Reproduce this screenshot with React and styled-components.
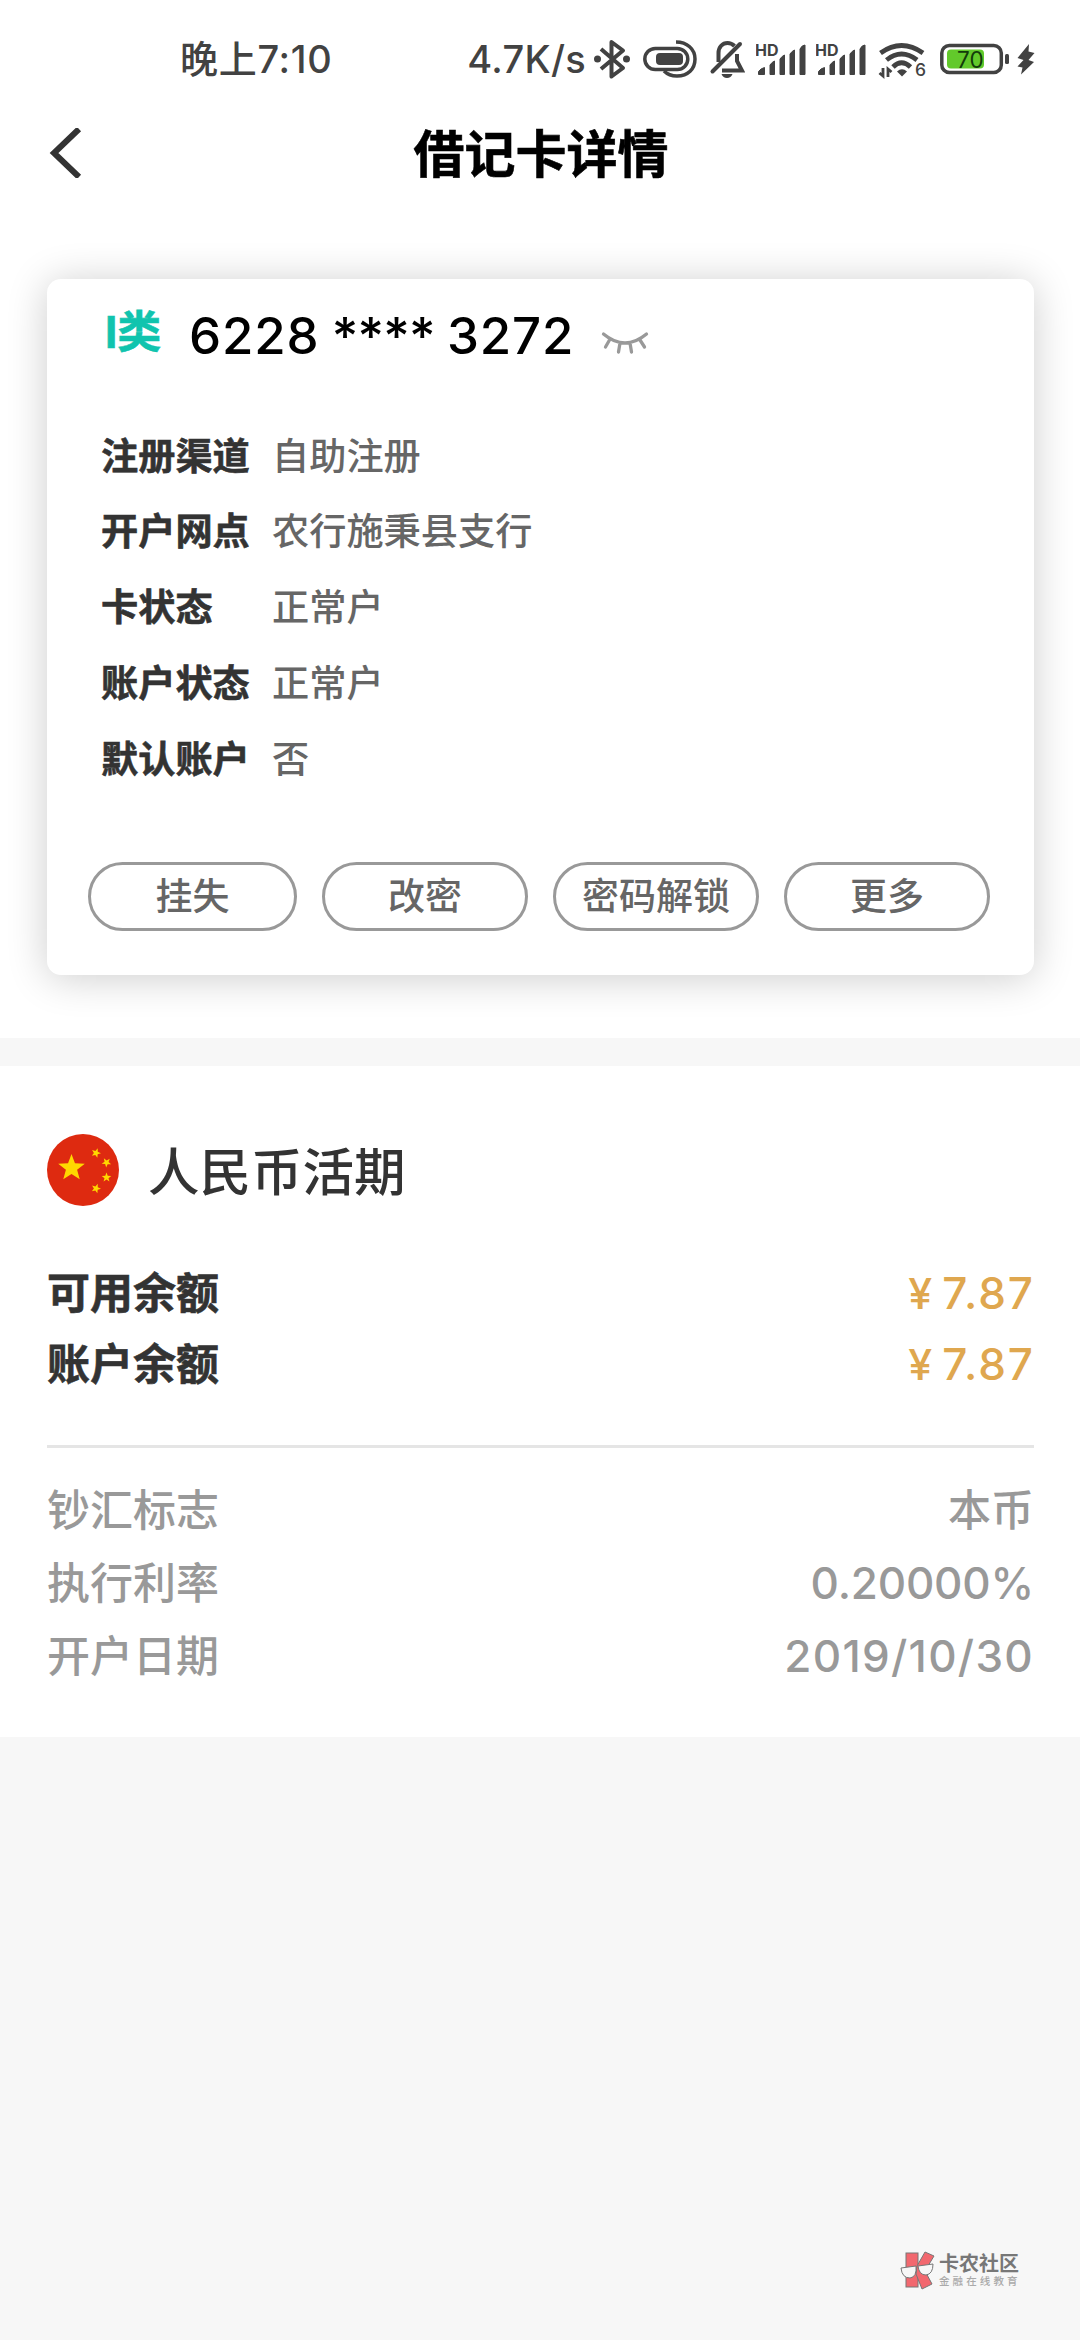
import React from "react";
import styled, { createGlobalStyle } from "styled-components";

const GlobalStyle = createGlobalStyle`
  * {
    box-sizing: border-box;
  }

  body {
    margin: 0;
    background-color: #f7f7f7;
    font-family: Inter, "Noto Sans CJK SC", sans-serif;
    color: #333;
  }
`;

const Page = styled.div`
  width: 1080px;
  height: 2340px;
  display: flex;
  flex-direction: column;
  background-color: #f7f7f7;
  overflow: hidden;
`;

const StatusBar = styled.div`
  height: 118px;
  padding: 0 45px 0 180px;
  display: flex;
  align-items: center;
  justify-content: space-between;
  background-color: white;
  color: #424242;
  font-size: 38px;
  line-height: 44px;
`;

const Time = styled.div`
  letter-spacing: 0.7px;
  font-weight: 500;
`;

const StatusIcons = styled.div`
  display: flex;
  align-items: center;
`;

const Speed = styled.span`
  margin-right: 7px;
  letter-spacing: 0.3px;
  font-weight: 500;
`;

const StatusIcon = styled.svg`
  display: block;
  flex: none;
  width: ${props => props.$width}px;
  height: 44px;
  margin-right: ${props => props.$gap || 0}px;
`;

const Header = styled.div`
  height: 70px;
  padding: 0 47px 0 49px;
  display: grid;
  grid-template-columns: 60px 1fr 60px;
  align-items: center;
  background-color: white;
`;

const BackIcon = styled.svg`
  display: block;
  width: 34px;
  height: 50px;
`;

const Title = styled.div`
  padding-top: 3px;
  color: black;
  font-size: 51px;
  line-height: 67px;
  font-weight: bold;
  text-align: center;
  -webkit-text-stroke: 0.6px;
`;

const CardSection = styled.div`
  height: 850px;
  padding: 91px 46px 0 47px;
  background-color: white;
`;

const Card = styled.div`
  height: 696px;
  border-radius: 14px;
  padding: 22px 44px 0 41px;
  background-color: white;
  box-shadow: 0 3px 40px rgba(0, 0, 0, 0.2);
`;

const CardTop = styled.div`
  height: 70px;
  padding-left: 17px;
  display: flex;
  align-items: center;
`;

const CardType = styled.div`
  width: 84px;
  padding-bottom: 8px;
  color: #10c4ae;
  font-size: 44px;
  line-height: 60px;
  font-weight: bold;
  -webkit-text-stroke: 0.6px;
`;

const CardNumber = styled.div`
  width: 412px;
  color: black;
  font-size: 51px;
  line-height: 70px;
  font-weight: 500;
  letter-spacing: 0.8px;
  white-space: nowrap;
`;

const Mask = styled.span`
  margin: 0 -2px;
  letter-spacing: -0.8px;
`;

const EyeIcon = styled.svg`
  display: block;
  width: 48px;
  height: 24px;
  margin-top: 14px;
`;

const InfoList = styled.div`
  height: 491px;
  padding: 49px 0 0 13px;
`;

const InfoRow = styled.div`
  height: ${props => props.$height}px;
  display: flex;
  align-items: center;
  font-size: 37.2px;
  line-height: 50px;
`;

const InfoLabel = styled.div`
  width: 171px;
  font-weight: bold;
  -webkit-text-stroke: 0.6px;
`;

const InfoValue = styled.div`
  color: #666;
  font-weight: 500;
`;

const Actions = styled.div`
  display: grid;
  grid-template-columns: 209px 206px 206px 206px;
  gap: 25px;
`;

const ActionButton = styled.button`
  height: 69px;
  padding: 0;
  border: 3px solid #999;
  border-radius: 35px;
  background-color: white;
  color: #666;
  font-family: inherit;
  font-size: 37px;
  line-height: 60px;
  font-weight: 500;
`;

const Account = styled.div`
  height: 671px;
  margin-top: 28px;
  padding: 68px 46px 0 47px;
  background-color: white;
`;

const Currency = styled.div`
  height: 72px;
  margin-bottom: 51px;
  display: flex;
  align-items: center;
  gap: 29px;
`;

const CurrencyName = styled.div`
  padding-top: 4px;
  font-size: 51.5px;
  line-height: 68px;
  font-weight: 500;
`;

const Flag = styled.svg`
  display: block;
  width: 72px;
  height: 72px;
`;

const BalanceRow = styled.div`
  height: 71px;
  display: flex;
  align-items: center;
  justify-content: space-between;
  font-size: 43px;
  line-height: 60px;
`;

const BalanceLabel = styled.div`
  font-weight: bold;
  -webkit-text-stroke: 0.6px;
`;

const Amount = styled.div`
  margin-right: -1px;
  color: #dfa74f;
  font-size: 44px;
  font-weight: 500;
  letter-spacing: 2px;
`;

const Yen = styled.span`
  margin-right: 8px;
  font-size: 43px;
`;

const Divider = styled.div`
  height: 3px;
  margin: 46px 0 25px;
  background-color: #e5e5e5;
`;

const DetailRow = styled.div`
  height: 73px;
  display: flex;
  align-items: center;
  justify-content: space-between;
  color: #999;
  font-size: 43px;
  line-height: 60px;
  font-weight: 500;
`;

const DetailValue = styled.div`
  font-size: ${props => (props.$number ? 44 : 43)}px;
  letter-spacing: ${props => props.$spacing || 0}px;
`;

const Footer = styled.div`
  margin-top: auto;
  height: 90px;
  padding-right: 61px;
  display: flex;
  justify-content: flex-end;
  align-items: flex-start;
  gap: 3px;
`;

const Logo = styled.svg`
  display: block;
  width: 36px;
  height: 40px;
`;

const Brand = styled.div`
  width: 80px;
  padding-top: 3px;
  color: #777;
  font-size: 20px;
  line-height: 22px;
  font-weight: bold;
  white-space: nowrap;
`;

const Slogan = styled.div`
  color: #aaa;
  font-size: 10.5px;
  line-height: 13px;
  font-weight: 500;
  letter-spacing: 3.1px;
`;

const infoRows = [
  { label: "注册渠道", value: "自助注册", height: 74 },
  { label: "开户网点", value: "农行施秉县支行", height: 75 },
  { label: "卡状态", value: "正常户", height: 77 },
  { label: "账户状态", value: "正常户", height: 76 },
  { label: "默认账户", value: "否", height: 75 }
];

const actions = ["挂失", "改密", "密码解锁", "更多"];

const balances = [
  { label: "可用余额", value: "7.87" },
  { label: "账户余额", value: "7.87" }
];

const details = [
  { label: "钞汇标志", value: "本币" },
  { label: "执行利率", value: "0.20000%", number: true, spacing: -0.2 },
  { label: "开户日期", value: "2019/10/30", number: true, spacing: 1.3 }
];

const Signal = ({ gap }) => (
  <StatusIcon $width={51} $gap={gap} viewBox="0 0 51 44">
    <text x="-1" y="18.5" fontSize="16" fontWeight="700" fill="#424242">HD</text>
    <path
      d="M2.500 37.500v-3q2-3 6-4v7zM14 37.500V28q2-3 4.500-4v13.500zM24 37.500V22q2-3 4.500-4v19.500zM34 37.500V17q2-3 4.500-4v24.500zM44 37.500V12q2-4 5-4v29.500z"
      fill="#424242"
      stroke="#424242"
      strokeLinejoin="round"
    />
  </StatusIcon>
);

const star = (cx, cy, r, turn) => {
  const points = [];
  for (let i = 0; i < 10; i++) {
    const radius = i % 2 ? r * 0.42 : r;
    const angle = ((turn + i * 36 - 90) * Math.PI) / 180;
    points.push(`${cx + radius * Math.cos(angle)},${cy + radius * Math.sin(angle)}`);
  }
  return points.join(" ");
};

const StatusRow = () => (
  <StatusBar>
    <Time>晚上7:10</Time>
    <StatusIcons>
      <Speed>4.7K/s</Speed>
      <StatusIcon $width={38} $gap={11} viewBox="0 0 38 44" fill="none" stroke="#424242" strokeWidth="4">
        <path d="M8 12l22 19-11.500 8.500V5L30 13.500 8 32" strokeLinejoin="round" />
        <circle cx="4.500" cy="22" r="3.500" fill="#424242" stroke="none" />
        <circle cx="33.500" cy="22" r="3.500" fill="#424242" stroke="none" />
      </StatusIcon>
      <StatusIcon $width={56} $gap={11} viewBox="0 0 56 44" fill="none" stroke="#424242" strokeWidth="3.500">
        <rect x="2.800" y="11.500" width="43" height="21" rx="10.500" />
        <rect x="14" y="16" width="27" height="12" rx="4" fill="#424242" stroke="none" />
        <path d="M34 5c11 0 19 7 19 17S46 39 35 39c-6 0-10-2-13-5" />
      </StatusIcon>
      <StatusIcon $width={36} $gap={11} viewBox="0 0 36 44" fill="none" stroke="#424242" strokeWidth="4">
        <path d="M3.500 34.500L31 7" strokeLinecap="round" />
        <path d="M9.500 25V16c0-6 4-10 9-10 3.500 0 5.500 1.500 7 3M28 17v7l5 9.500H13" />
        <path d="M12.500 37h11q-1.500 4-5.500 4t-5.500-4z" fill="#424242" stroke="none" />
      </StatusIcon>
      <Signal gap={9} />
      <Signal gap={11} />
      <StatusIcon $width={48} $gap={14} viewBox="0 0 48 44" fill="none" stroke="#424242" strokeWidth="4.800">
        <path d="M2.500 16Q23.500 1 45 16" />
        <path d="M8.500 23Q23.500 11 39 23" />
        <path d="M15 30Q23.500 21.500 32.500 30" />
        <path d="M19 34.500q5-4.500 10 0l-5 5z" fill="#424242" stroke="none" />
        <path d="M5 31v8l-3.500-3M10 40v-8l3.500 3" strokeWidth="2.800" />
        <text x="37" y="39" fontSize="17.500" fontWeight="500" fill="#424242" stroke="none">6</text>
      </StatusIcon>
      <StatusIcon $width={70} $gap={6} viewBox="0 0 70 44" fill="none">
        <rect x="1.800" y="8.500" width="59.500" height="27" rx="7.500" stroke="#424242" strokeWidth="3.500" />
        <rect x="7" y="12.500" width="37" height="19" rx="4" fill="#62c92b" />
        <rect x="65" y="17" width="4" height="10" rx="1.500" fill="#424242" />
        <text x="17" y="30.500" fontSize="22.500" fill="#123c0a">70</text>
      </StatusIcon>
      <StatusIcon $width={19} viewBox="0 0 19 44">
        <path d="M13 7L1.500 21l6 2-6 6.500 5 1L5 37.500 18 25l-5.500-2 6-7-6-1.500z" fill="#424242" />
      </StatusIcon>
    </StatusIcons>
  </StatusBar>
);

const CardInfo = () => (
  <CardSection>
    <Card>
      <CardTop>
        <CardType>I类</CardType>
        <CardNumber>
          6228 <Mask>****</Mask> 3272
        </CardNumber>
        <EyeIcon viewBox="0 0 48 24" fill="none" stroke="#999" strokeWidth="3.300" strokeLinecap="round">
          <path d="M2.500 3q21.500 18 43 0M8.500 9L4.500 16M19 12l-1.500 9M29 12l1.500 9M39 9l4.500 7" />
        </EyeIcon>
      </CardTop>
      <InfoList>
        {infoRows.map(row => (
          <InfoRow key={row.label} $height={row.height}>
            <InfoLabel>{row.label}</InfoLabel>
            <InfoValue>{row.value}</InfoValue>
          </InfoRow>
        ))}
      </InfoList>
      <Actions>
        {actions.map(action => (
          <ActionButton key={action}>{action}</ActionButton>
        ))}
      </Actions>
    </Card>
  </CardSection>
);

const AccountInfo = () => (
  <Account>
    <Currency>
      <Flag viewBox="0 0 72 72">
        <circle cx="36" cy="36" r="36" fill="#de2a10" />
        <g fill="#ffd800">
          <polygon points={star(24.5, 34, 14, 0)} />
          <polygon points={star(49, 19, 5, 20)} />
          <polygon points={star(59.5, 28.5, 5, 40)} />
          <polygon points={star(59.5, 43.5, 5, 0)} />
          <polygon points={star(49, 54.5, 5, 20)} />
        </g>
      </Flag>
      <CurrencyName>人民币活期</CurrencyName>
    </Currency>
    {balances.map(item => (
      <BalanceRow key={item.label}>
        <BalanceLabel>{item.label}</BalanceLabel>
        <Amount>
          <Yen>¥</Yen>
          {item.value}
        </Amount>
      </BalanceRow>
    ))}
    <Divider />
    {details.map(item => (
      <DetailRow key={item.label}>
        {item.label}
        <DetailValue $number={item.number} $spacing={item.spacing}>
          {item.value}
        </DetailValue>
      </DetailRow>
    ))}
  </Account>
);

const Watermark = () => (
  <Footer>
    <Logo viewBox="0 0 36 40" stroke="#777" strokeWidth="1">
      <rect x="6" y="3" width="12" height="34" fill="#f2686f" />
      <path d="M17 16L25 2l9 4-9 15 7 13-10 5-6-15z" fill="#f2686f" />
      <path d="M1 18l15-2q1 11-6 12-8 0-9-10zM18 16l15-2q0 10-7 11-7 0-8-9z" fill="#f7f7f7" />
    </Logo>
    <Brand>
      卡农社区
      <Slogan>金融在线教育</Slogan>
    </Brand>
  </Footer>
);

export default class App extends React.Component {
  render() {
    return (
      <Page>
        <GlobalStyle />
        <StatusRow />
        <Header>
          <BackIcon viewBox="0 0 34 50" fill="none" stroke="#333" strokeWidth="6">
            <path d="M30 1L5 25l25 24" />
          </BackIcon>
          <Title>借记卡详情</Title>
        </Header>
        <CardInfo />
        <AccountInfo />
        <Watermark />
      </Page>
    );
  }
}
